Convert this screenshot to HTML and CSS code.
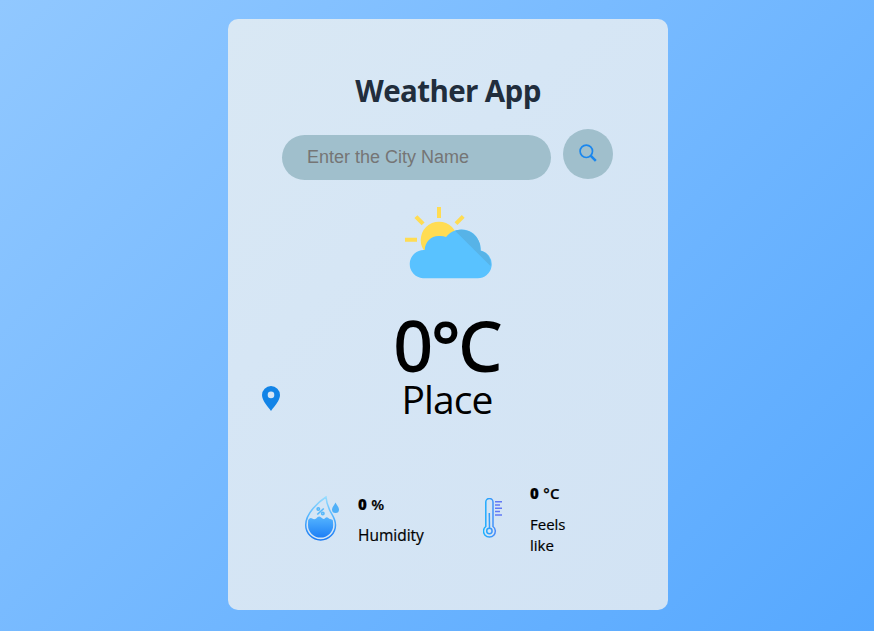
FILE: index.html
```html
<!DOCTYPE html>
<html lang="en">
<head>
<meta charset="utf-8">
<title>Weather App</title>
<link rel="stylesheet" href="styles.css">
</head>
<body>
<main class="card">
  <h1 class="title">Weather App</h1>
  <form class="search">
    <input class="city" type="text" placeholder="Enter the City Name">
    <button class="go" type="button" aria-label="Search">
      <svg width="18" height="18" viewBox="0 0 18 18" fill="none" stroke="#1b87ee"><circle cx="7.300" cy="7.300" r="6.200" stroke-width="1.700"/><path d="M11.600 11.600L16.800 16.800" stroke-width="2.500"/></svg>
    </button>
  </form>
  <svg class="weather" width="88" height="73" viewBox="404 206 88 73">
    <g fill="#ffdc52"><circle cx="439" cy="240" r="18.300"/><path d="M437 207h4v11h-4zM405 237.800h12v4h-12zM414.400 218l3-2.800 7.200 7.300-3 2.700zM454.600 222.200l7.200-7.200 2.800 2.800-7.200 7.200z"/></g>
    <path fill="#59c2ff" d="M423 278.200a14 14 0 0 1 1.700-28.200C425 242 431 236 438.500 236Q442.500 235.500 446 237A19.300 19.300 0 0 1 480.500 250.500A14 14 0 0 1 477 278.200Z"/>
    <path fill="#57b3e7" d="M455 230.800A19.300 19.300 0 0 1 480.500 250.500A14 14 0 0 1 490.500 266Z"/>
  </svg>
  <div class="temp">0°C</div>
  <div class="location">
    <svg class="pin" width="18" height="25" viewBox="0 0 18 25"><path fill="#1284e7" fill-rule="evenodd" d="M9 0a9 9 0 0 1 9 9c0 5.500-5.500 11-9 16C5.500 20 0 14.500 0 9a9 9 0 0 1 9-9zm0 5.600a3.300 3.300 0 1 0 0 6.600 3.300 3.300 0 0 0 0-6.600z"/></svg>
    <div class="place">Place</div>
  </div>
  <div class="details">
    <section class="humidity">
      <svg width="36" height="46" viewBox="304 496 36 46">
        <defs><linearGradient id="water" x1="0" y1="496" x2="0" y2="541" gradientUnits="userSpaceOnUse"><stop offset="0" stop-color="#9de0ff"/><stop offset=".45" stop-color="#58b8ff"/><stop offset="1" stop-color="#1879f5"/></linearGradient></defs>
        <path d="M326 498C319 502.500 305.700 514 305.700 526a14.900 14.900 0 0 0 29.800 0C335.500 516 327 513 326 498Z" fill="none" stroke="url(#water)" stroke-width="1.500"/>
        <path d="M308.200 521q2-3 4-1.500t4 0q2.500-3.500 5-1t4 .5q2-2 4 .8 2 .5 3.500 1.200.5 2 .5 5a12.600 12.600 0 0 1-25.200 0q0-3 .2-5z" fill="url(#water)"/>
        <path d="M335.500 503.500c1 2.500 3.500 4.500 3.500 7a3.500 3.500 0 0 1-7 0c0-2.500 2.500-4.500 3.500-7z" fill="#50b0f8"/>
        <g fill="none" stroke="#58b8fa" stroke-width="1.600"><path d="M317.300 515.500l6.500-6"/><circle cx="318.300" cy="510" r="1.200"/><circle cx="322.800" cy="514.500" r="1.200"/></g>
      </svg>
      <div class="reading"><p class="value"><b>0</b> %</p><p class="label">Humidity</p></div>
    </section>
    <section class="feels">
      <svg width="20" height="40" viewBox="483 499 20 40" fill="none">
        <defs><linearGradient id="heat" x1="483" y1="0" x2="503" y2="0" gradientUnits="userSpaceOnUse"><stop stop-color="#18b4ff"/><stop offset="1" stop-color="#6870f4"/></linearGradient></defs>
        <g stroke="url(#heat)" stroke-width="1.500"><path d="M485.800 527.500V503a3.500 3.500 0 0 1 7.200 0v24.500a5.900 5.900 0 1 1-7.200 0z"/><circle cx="489.400" cy="532" r="2.700"/><path d="M489.300 514l.2 15"/></g>
        <path d="M495 502.700h7M495 506h5M495 509.300h7M495 512.600h5M495 515.900h7" stroke="#6078f5" stroke-width="1.500"/>
      </svg>
      <div class="reading"><p class="value"><b>0</b> °C</p><p class="label">Feels<br>like</p></div>
    </section>
  </div>
</main>
</body>
</html>
```
FILE: styles.css
```css
* { box-sizing: border-box; }
body {
  margin: 0;
  min-height: 631px;
  padding-top: 19px;
  background: linear-gradient(135deg, #91c8ff, #56a8ff);
  font-family: "Open Sans", "Noto Sans", sans-serif;
  color: #000;
}
.card {
  width: 440px;
  height: 591px;
  margin: 0 auto 0 228px;
  padding-top: 50px;
  border-radius: 10px;
  background: linear-gradient(135deg, #d9e8f4, #d6e6f5 35%, #d2e3f4);
  display: flex;
  flex-direction: column;
}
.title {
  margin: 0;
  height: 44px;
  line-height: 44px;
  font-size: 29.5px;
  letter-spacing: -0.6px;
  font-weight: 700;
  text-align: center;
  color: #212d3c;
}
.search {
  display: flex;
  gap: 12px;
  align-items: flex-start;
  margin: 16px 0 0 54px;
}
.city {
  width: 269px;
  height: 45px;
  margin: 6px 0 0;
  padding: 0 25px;
  border: 0;
  border-radius: 23px;
  background: #a0bfcc;
  font: 18px "Liberation Sans", sans-serif;
}
.city::placeholder { color: #757575; }
.go {
  width: 50px;
  height: 50px;
  padding: 0 0 2px;
  border: 0;
  border-radius: 50%;
  background: #a0bfcc;
  display: grid;
  place-items: center;
}
.weather { margin: 26px 0 0 176px; }
.temp {
  margin-top: 31px;
  height: 70px;
  line-height: 70px;
  text-align: center;
  padding-right: 2px;
  font-size: 68px;
  letter-spacing: -1.5px;
  -webkit-text-stroke: 1.8px #000;
}
.location {
  display: grid;
  grid-template-columns: 18px 1fr;
  align-items: center;
  margin: -2px 34px 0 34px;
  height: 44px;
}
.pin { margin-top: -4px; }
.place {
  line-height: 42px;
  font-size: 39px;
  letter-spacing: -0.9px;
  text-align: center;
  padding-right: 20px;
  margin-top: -2px;
}
.details { display: flex; margin: 61px 0 0 76px; }
.humidity, .feels { display: flex; align-items: flex-start; }
.humidity { width: 179px; padding-top: 11px; }
.humidity svg { margin-top: 1px; margin-right: 18px; }
.feels svg { margin-top: 15px; margin-right: 27px; }
.value, .label {
  margin: 0;
  font-size: 15px;
  line-height: 21px;
}
.label { font-size: 15.5px; -webkit-text-stroke: 0.2px #000; }
.feels .label { font-size: 15px; }
.value {
  font-weight: 600;
  margin-bottom: 10px;
  letter-spacing: 0.3px;
  -webkit-text-stroke: 0.2px #000;
}
```
